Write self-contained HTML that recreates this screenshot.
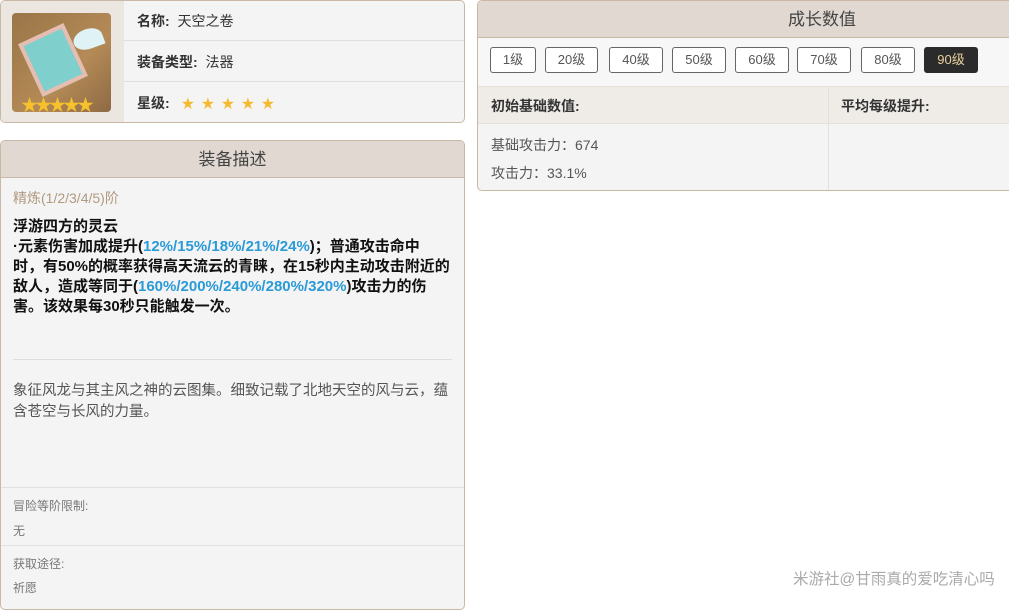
<!DOCTYPE html>
<html><head><meta charset="utf-8"><style>
*{box-sizing:border-box;margin:0;padding:0}
body{width:1009px;height:600px;background:#fff;font-family:"Liberation Sans","Noto Sans CJK SC",sans-serif;position:relative;overflow:hidden;color:#333}
.abs{position:absolute}
.card{position:absolute;border:1px solid #c9b8a6;border-radius:5px;background:#f4f4f4;overflow:hidden}
.row{position:absolute;left:123px;right:0;height:40px;border-bottom:1px solid #e2ddd8;font-size:14px;line-height:40px;padding-left:13px}
.row b{color:#333}
.hdr{position:absolute;left:0;right:0;top:0;height:37px;background:#e1d9d1;border-bottom:1px solid #c9b8a6;text-align:center;font-size:17px;line-height:37px;color:#444}
.btn{position:absolute;top:47px;height:26px;border:1px solid #666;border-radius:3px;background:#fff;font-size:13px;line-height:24px;text-align:center;color:#555}
.bl{color:#2a9ad8}
.t{position:absolute;left:12px;font-size:14px;white-space:nowrap}
</style></head><body>
<div class="card" style="left:0;top:0;width:465px;height:123px">
 <div class="abs" style="left:0;top:0;width:123px;height:123px;background:#ebe6e0"></div>
 <div class="abs" style="left:11px;top:12px;width:99px;height:99px;border-radius:4px;background:linear-gradient(135deg,#9a7548,#b48a56 60%,#8d6a45)"></div>
 <div class="abs" style="left:27px;top:30px;width:50px;height:58px;background:#7fd0cc;border:4px solid #e6bdb0;transform:rotate(-25deg)"></div>
 <div class="abs" style="left:72px;top:28px;width:30px;height:20px;background:#dff3f6;border-radius:50% 50% 0 50%;transform:rotate(-20deg)"></div>
 <div class="abs" style="left:20px;top:90px;font-size:17px;color:#f6c12c;letter-spacing:-3px">★★★★★</div>
 <div class="row" style="top:0"><b>名称:</b>&nbsp;&nbsp;天空之卷</div>
 <div class="row" style="top:41px"><b>装备类型:</b>&nbsp;&nbsp;法器</div>
 <div class="row" style="top:82px;border:none"><b>星级:</b>&nbsp;&nbsp;&nbsp;<span style="color:#f6b92c;font-size:13px;letter-spacing:7px">★★★★★</span></div>
</div>
<div class="card" style="left:0;top:140px;width:465px;height:470px">
 <div class="hdr">装备描述</div>
 <div class="t" style="top:47px;color:#b09a80">精炼(1/2/3/4/5)阶</div>
 <div class="t" style="top:76px;font-size:15px;font-weight:bold;color:#111;line-height:20px">浮游四方的灵云<br>·元素伤害加成提升(<span class="bl">12%/15%/18%/21%/24%</span>)；普通攻击命中<br>时，有50%的概率获得高天流云的青睐，在15秒内主动攻击附近的<br>敌人，造成等同于(<span class="bl">160%/200%/240%/280%/320%</span>)攻击力的伤<br>害。该效果每30秒只能触发一次。</div>
 <div class="abs" style="left:12px;right:12px;top:218px;border-top:1px solid #ddd"></div>
 <div class="t" style="top:240px;font-size:14.5px;line-height:21px;color:#555">象征风龙与其主风之神的云图集。细致记载了北地天空的风与云，蕴<br>含苍空与长风的力量。</div>
 <div class="abs" style="left:0;right:0;top:346px;border-top:1px solid #e0e0e0"></div>
 <div class="t" style="top:356px;font-size:12px;color:#777">冒险等阶限制:</div>
 <div class="t" style="top:381px;font-size:12px;color:#777">无</div>
 <div class="abs" style="left:0;right:0;top:404px;border-top:1px solid #e0e0e0"></div>
 <div class="t" style="top:414px;font-size:12px;color:#777">获取途径:</div>
 <div class="t" style="top:438px;font-size:12px;color:#777">祈愿</div>
</div>
<div class="card" style="left:477px;top:0;width:545px;height:191px">
 <div class="hdr" style="padding-left:145px">成长数值</div>
 <div class="abs" style="left:0;right:0;top:37px;height:48px;background:#f7f7f7"></div>
 <div class="abs" style="left:0;right:0;top:85px;height:38px;background:#efebe7;border-top:1px solid #e6e0da;border-bottom:1px solid #e6e0da"></div>
 <div class="abs" style="left:350px;top:85px;bottom:0;border-left:1px solid #e6e0da"></div>
 <div class="abs" style="left:13px;top:95px;font-size:14px;font-weight:bold">初始基础数值:</div>
 <div class="abs" style="left:363px;top:95px;font-size:14px;font-weight:bold">平均每级提升:</div>
 <div class="abs" style="left:13px;top:134px;font-size:14px;color:#555">基础攻击力：674</div>
 <div class="abs" style="left:13px;top:162px;font-size:14px;color:#555">攻击力：33.1%</div>
</div>
<div class="btn" style="left:490px;width:46px">1级</div>
<div class="btn" style="left:545px;width:53px">20级</div>
<div class="btn" style="left:609px;width:54px">40级</div>
<div class="btn" style="left:672px;width:54px">50级</div>
<div class="btn" style="left:735px;width:54px">60级</div>
<div class="btn" style="left:797px;width:54px">70级</div>
<div class="btn" style="left:861px;width:54px">80级</div>
<div class="btn" style="left:924px;width:54px;background:#2b2b2b;border-color:#2b2b2b;color:#e8cfa0">90级</div>
<div class="abs" style="left:793px;top:567px;font-size:15.5px;color:#aaa;white-space:nowrap">米游社@甘雨真的爱吃清心吗</div>
</body></html>
